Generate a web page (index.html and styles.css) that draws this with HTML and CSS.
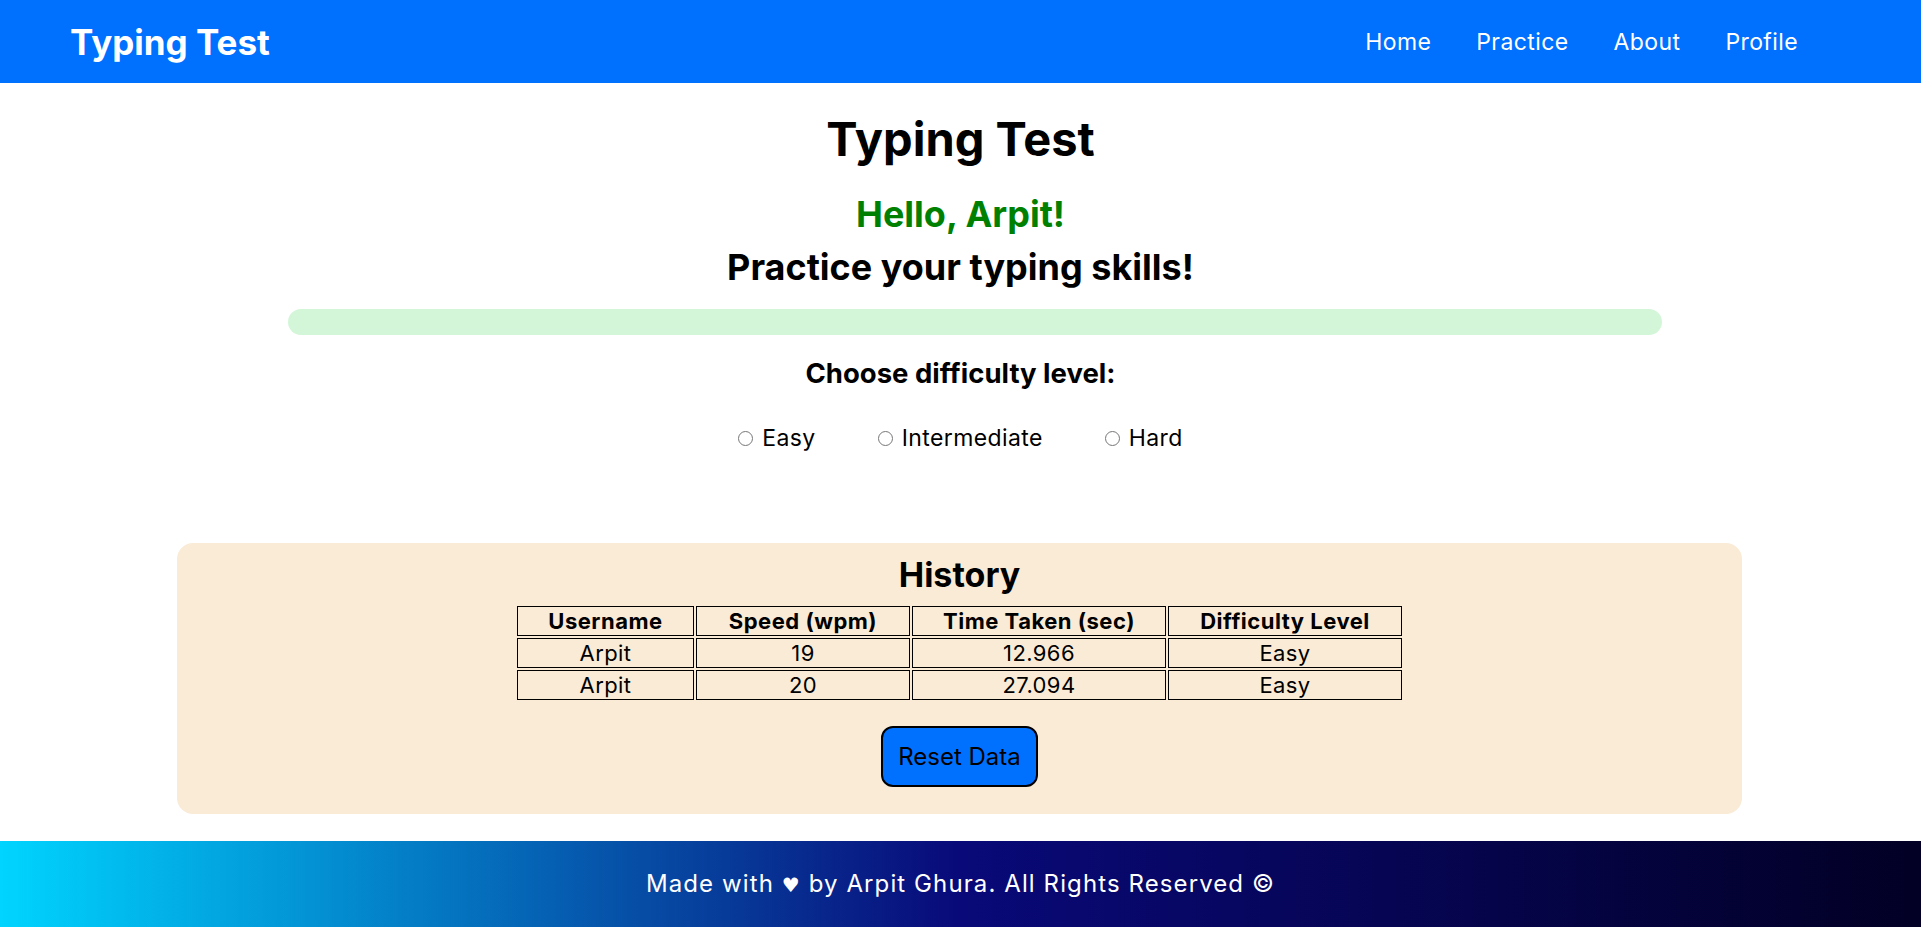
FILE: index.html
```html
<!DOCTYPE html>
<html lang="en">
<head>
<meta charset="utf-8">
<title>Typing Test</title>
<link rel="stylesheet" href="styles.css">
</head>
<body>
<header class="navbar">
  <div class="logo">Typing Test</div>
  <nav class="nav-links">
    <a href="#">Home</a>
    <a href="#">Practice</a>
    <a href="#">About</a>
    <a href="#">Profile</a>
  </nav>
</header>
<main class="content">
  <h1 class="title">Typing Test</h1>
  <h2 class="greeting">Hello, Arpit!</h2>
  <h2 class="subtitle">Practice your typing skills!</h2>
  <div class="progress-wrap"><div class="progress"></div></div>
  <h3 class="choose">Choose difficulty level:</h3>
  <div class="levels">
    <label class="level"><input type="radio" name="level" class="radio"><span>Easy</span></label>
    <label class="level"><input type="radio" name="level" class="radio"><span>Intermediate</span></label>
    <label class="level"><input type="radio" name="level" class="radio"><span>Hard</span></label>
  </div>
  <section class="history">
    <h2 class="history-title">History</h2>
    <table class="history-table">
      <thead>
        <tr><th class="c1">Username</th><th class="c2">Speed (wpm)</th><th class="c3">Time Taken (sec)</th><th class="c4">Difficulty Level</th></tr>
      </thead>
      <tbody>
        <tr><td>Arpit</td><td>19</td><td>12.966</td><td>Easy</td></tr>
        <tr><td>Arpit</td><td>20</td><td>27.094</td><td>Easy</td></tr>
      </tbody>
    </table>
    <button class="reset-btn">Reset Data</button>
  </section>
</main>
<footer class="footer"><p class="footer-text">Made with <span class="heart">♥</span> by Arpit Ghura. All Rights Reserved ©</p></footer>
</body>
</html>
```
FILE: styles.css
```css
* { box-sizing: border-box; }
body {
  margin: 0;
  font-family: "Inter", "Noto Sans", sans-serif;
  color: #000;
  background: #fff;
}
.navbar {
  height: 83px;
  background: #0070ff;
  display: flex;
  align-items: center;
  justify-content: space-between;
  padding: 0 123px 0 70px;
}
.logo {
  color: #fff;
  font-size: 35px;
  font-weight: 700;
}
.nav-links {
  display: flex;
  gap: 45px;
}
.nav-links a {
  color: #fff;
  text-decoration: none;
  font-size: 23px;
  letter-spacing: 0.4px;
}
.content {
  text-align: center;
  padding-top: 29px;
}
.title {
  margin: 0;
  font-size: 47px;
  line-height: 54px;
  font-weight: 700;
}
.greeting {
  margin: 27px 0 0;
  font-size: 36px;
  line-height: 42px;
  color: #008000;
  font-weight: 700;
}
.subtitle {
  margin: 11px 0 0;
  font-size: 36px;
  line-height: 42px;
  font-weight: 700;
}
.progress-wrap {
  margin: 21px 0 0 288px;
  width: 1374px;
}
.progress {
  height: 26px;
  border-radius: 13px;
  background: #d3f6d8;
}
.choose {
  margin: 22px 0 0;
  font-size: 27.5px;
  line-height: 32px;
  font-weight: 700;
}
.levels {
  margin-top: 35px;
  display: flex;
  justify-content: center;
  gap: 62px;
  font-size: 23px;
  line-height: 28px;
  letter-spacing: 0.4px;
}
.level {
  display: flex;
  align-items: center;
  gap: 9px;
}
.radio {
  margin: 0;
  width: 15px;
  height: 15px;
}
.history {
  margin: 91px 179px 0 177px;
  background: #faebd7;
  border-radius: 16px;
  padding: 12px 0 27px;
  display: flex;
  flex-direction: column;
  align-items: center;
}
.history-title {
  margin: 0;
  font-size: 34px;
  line-height: 40px;
  font-weight: 700;
}
.history-table {
  margin-top: 9px;
  table-layout: fixed;
  width: 889px;
  border-spacing: 2px;
}
.history-table th,
.history-table td {
  border: 1px solid #000;
  padding: 0;
  height: 30px;
  line-height: 28px;
  font-size: 22px;
  text-align: center;
}
.history-table th { font-weight: 700; letter-spacing: 0.5px; }
.history-table td { font-weight: 400; letter-spacing: 0.4px; }
.c1 { width: 177px; }
.c2 { width: 214px; }
.c3 { width: 254px; }
.c4 { width: 234px; }
.reset-btn {
  margin-top: 24px;
  padding: 15px;
  border: 2px solid #000;
  border-radius: 12px;
  background: #0070ff;
  color: #000;
  font-family: inherit;
  font-size: 24px;
  line-height: 27px;
}
.footer {
  margin-top: 27px;
  height: 86px;
  display: flex;
  align-items: center;
  justify-content: center;
  background: linear-gradient(90deg, #00d4ff 0%, #090979 50%, #020024 100%);
}
.footer-text {
  margin: 0;
  color: #fff;
  font-size: 24px;
  line-height: 30px;
  letter-spacing: 1.1px;
}
.heart {
  font-family: "DejaVu Sans", sans-serif;
  font-size: 20px;
}
```
